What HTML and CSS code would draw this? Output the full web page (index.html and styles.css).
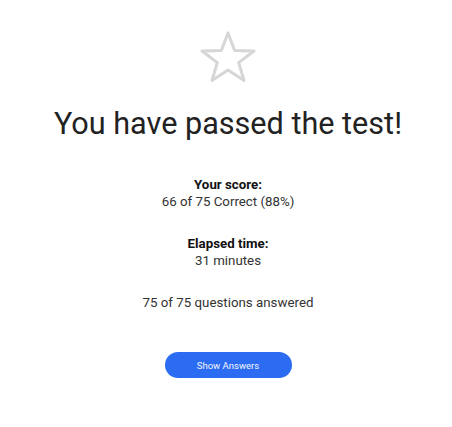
FILE: index.html
```html
<!DOCTYPE html>
<html>
<head>
<meta charset="utf-8">
<link rel="stylesheet" href="styles.css">
</head>
<body>
<main class="result">
  <svg class="star" width="60" height="56" viewBox="0 0 60 56">
    <polygon points="30,4 36.6,21.5 56,22 40.7,33.6 46,51.5 30,41 14,51.5 19.3,33.6 4,22 23.4,21.5" fill="none" stroke="#d6d6d6" stroke-width="3" stroke-linejoin="round"/>
  </svg>
  <h1 class="title">You have passed the test!</h1>
  <div class="stat first">
    <div class="label">Your score:</div>
    <div class="value">66 of 75 Correct (88%)</div>
  </div>
  <div class="stat">
    <div class="label">Elapsed time:</div>
    <div class="value">31 minutes</div>
  </div>
  <div class="answered">75 of 75 questions answered</div>
  <button class="btn">Show Answers</button>
</main>
</body>
</html>
```
FILE: styles.css
```css
html, body { margin: 0; padding: 0; background: #fff; }
body { font-family: Roboto, "Noto Sans", sans-serif; color: #222; }
.result {
  display: flex;
  flex-direction: column;
  align-items: center;
  padding: 29px 0 0 4px;
}
.star { display: block; }
.title {
  margin: 19px 0 0;
  font-size: 30.6px;
  font-weight: 400;
  line-height: 40px;
  color: #222;
}
.stat { margin-top: 26px; text-align: center; font-size: 13.3px; line-height: 16.5px; }
.stat.first { margin-top: 33px; }
.label { font-weight: 700; color: #111; }
.value { color: #333; }
.answered { margin-top: 25.5px; font-size: 13.3px; line-height: 16.5px; color: #333; }
.btn {
  margin-top: 41px;
  width: 127px;
  height: 26px;
  border: none;
  border-radius: 13px;
  background: #2b6cf2;
  color: #f4f6ff;
  font-family: Roboto, sans-serif;
  font-size: 9.5px;
  padding: 0;
}
```
